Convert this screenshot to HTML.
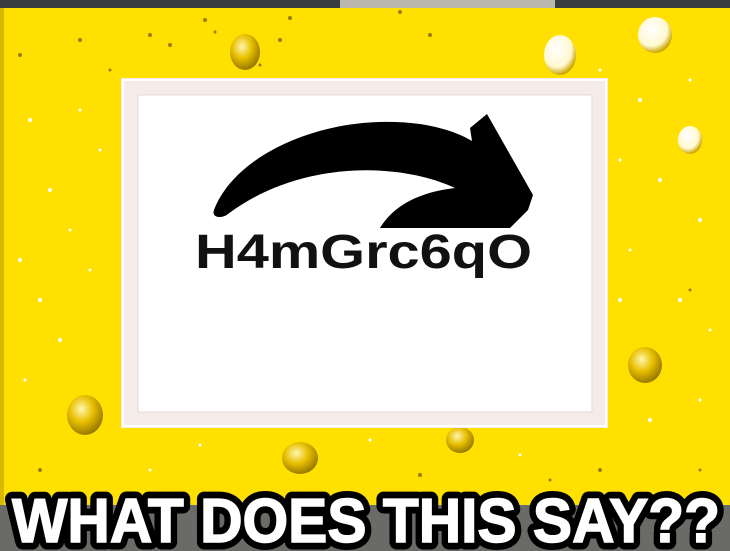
<!DOCTYPE html>
<html><head><meta charset="utf-8"><style>
html,body{margin:0;padding:0;width:730px;height:551px;overflow:hidden;background:#ffe100}
svg{display:block}
</style></head><body>
<svg width="730" height="551" viewBox="0 0 730 551" xmlns="http://www.w3.org/2000/svg">
<defs>
<radialGradient id="g" cx="40%" cy="35%" r="65%"><stop offset="0" stop-color="#fff6b0"/><stop offset="0.5" stop-color="#e8c000"/><stop offset="1" stop-color="#9a7a00"/></radialGradient>
<radialGradient id="w" cx="40%" cy="35%" r="65%"><stop offset="0" stop-color="#ffffff"/><stop offset="0.7" stop-color="#fff8d0"/><stop offset="1" stop-color="#c9a500"/></radialGradient>
</defs>
<rect width="730" height="551" fill="#ffe000"/>
<rect width="730" height="8" fill="#3a3d40"/>
<rect x="340" y="0" width="215" height="8" fill="#b9b7ae"/>
<rect x="0" y="505" width="730" height="46" fill="#6a6a66"/>
<rect x="0" y="8" width="4" height="497" fill="#d8b800"/>
<ellipse cx="245" cy="52" rx="15" ry="18" fill="url(#g)"/>
<ellipse cx="560" cy="55" rx="16" ry="20" fill="url(#w)"/>
<ellipse cx="655" cy="35" rx="17" ry="18" fill="url(#w)"/>
<ellipse cx="85" cy="415" rx="18" ry="20" fill="url(#g)"/>
<ellipse cx="645" cy="365" rx="17" ry="18" fill="url(#g)"/>
<ellipse cx="300" cy="458" rx="18" ry="16" fill="url(#g)"/>
<ellipse cx="460" cy="440" rx="14" ry="13" fill="url(#g)"/>
<ellipse cx="690" cy="140" rx="12" ry="14" fill="url(#w)"/>
<g fill="#fff">
<circle cx="30" cy="120" r="2"/><circle cx="50" cy="190" r="2"/><circle cx="20" cy="260" r="2"/><circle cx="70" cy="230" r="1.5"/><circle cx="40" cy="300" r="2"/><circle cx="90" cy="270" r="1.5"/><circle cx="60" cy="340" r="2"/><circle cx="25" cy="380" r="1.5"/><circle cx="100" cy="150" r="1.5"/><circle cx="80" cy="110" r="1.5"/>
<circle cx="640" cy="100" r="2"/><circle cx="660" cy="180" r="2"/><circle cx="700" cy="220" r="2"/><circle cx="630" cy="250" r="1.5"/><circle cx="680" cy="300" r="2"/><circle cx="710" cy="330" r="1.5"/><circle cx="650" cy="420" r="2"/><circle cx="700" cy="400" r="1.5"/><circle cx="620" cy="160" r="1.5"/><circle cx="690" cy="80" r="1.5"/><circle cx="600" cy="70" r="1.5"/><circle cx="620" cy="300" r="2"/>
<circle cx="370" cy="440" r="1.5"/><circle cx="200" cy="445" r="1.5"/><circle cx="520" cy="455" r="1.5"/><circle cx="150" cy="470" r="1.5"/>
</g>
<g fill="#9a7c10">
<circle cx="80" cy="40" r="2"/><circle cx="150" cy="35" r="2"/><circle cx="170" cy="45" r="2"/><circle cx="205" cy="20" r="2"/><circle cx="215" cy="32" r="1.5"/><circle cx="280" cy="40" r="2"/><circle cx="290" cy="18" r="2"/><circle cx="400" cy="12" r="2"/><circle cx="430" cy="35" r="2"/><circle cx="260" cy="65" r="1.5"/><circle cx="20" cy="55" r="2"/><circle cx="110" cy="70" r="1.5"/><circle cx="550" cy="480" r="1.5"/><circle cx="600" cy="470" r="2"/><circle cx="700" cy="470" r="1.5"/><circle cx="40" cy="470" r="2"/><circle cx="420" cy="475" r="2"/><circle cx="690" cy="290" r="1.5"/>
</g>
<rect x="121" y="78" width="487" height="350" fill="#f5ebe8"/>
<rect x="123" y="80" width="483" height="346" fill="none" stroke="#fff" stroke-width="2"/>
<rect x="138" y="95" width="454" height="317" fill="#fff" stroke="#e6d8d4" stroke-width="1"/>
<path d="M214,210 C236,152 330,112 420,124 C445,128 460,134 472,141 L470,128 L487,114 L533,195 L528,210 L510,228 L380,228 C394,205 420,192 455,188 C400,162 300,160 228,214 C222,219 211,218 214,210 Z" fill="#000"/>
<text x="195" y="268" font-family="Liberation Sans, sans-serif" font-weight="bold" font-size="48" textLength="337" lengthAdjust="spacingAndGlyphs" fill="#111">H4mGrc6qO</text>
<text x="12" y="542" font-family="Liberation Sans, sans-serif" font-weight="bold" font-size="62" textLength="708" lengthAdjust="spacingAndGlyphs" fill="#fff" stroke="#000" stroke-width="15" stroke-linejoin="round" paint-order="stroke">WHAT DOES THIS SAY??</text>
<text x="12" y="542" font-family="Liberation Sans, sans-serif" font-weight="bold" font-size="62" textLength="708" lengthAdjust="spacingAndGlyphs" fill="#fff" stroke="#fff" stroke-width="1.5">WHAT DOES THIS SAY??</text>
</svg>
</body></html>
